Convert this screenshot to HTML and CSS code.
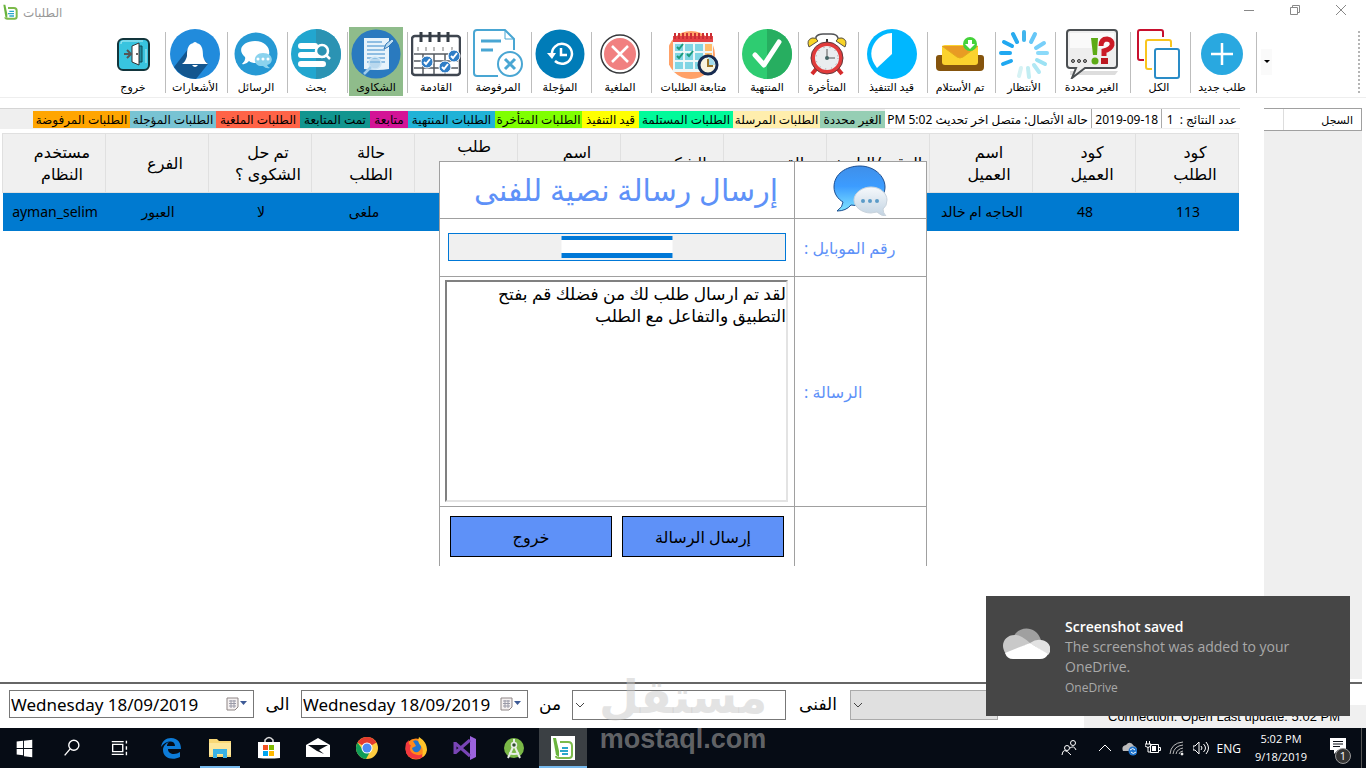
FILE: index.html
```html
<!DOCTYPE html>
<html lang="ar">
<head>
    <meta charset="UTF-8">
    <meta name="viewport" content="width=device-width, initial-scale=1.0">
    <title>الطلبات</title>
    <link rel="stylesheet" href="styles.css">
</head>
<body>

    <!-- Title bar -->
    <header class="titlebar">
        <svg class="app-icon" viewBox="0 0 24 24"><path d="M9 6h9q4 0 4 4v9q0 3-3 3H8q-3 0-3-2" fill="none" stroke="#7cba4b" stroke-width="3"/><path d="M2 1l3 18 3 2V15L5 1z" fill="#6ab43e"/><path d="M11 11h7M9 14.500h9M11 18h7" stroke="#2aa7c9" stroke-width="2"/></svg>
        <h1 class="window-title" dir="rtl">الطلبات</h1>
        <div class="window-controls">
            <button type="button" aria-label="Minimize"><svg viewBox="0 0 12 12"><path d="M1 6.500h10"/></svg></button>
            <button type="button" aria-label="Restore"><svg viewBox="0 0 12 12"><path d="M1.500 3.500h7v7h-7zM3.500 3.500v-2h7v7h-2"/></svg></button>
            <button type="button" aria-label="Close"><svg viewBox="0 0 12 12"><path d="M1 1l10 10M11 1L1 11"/></svg></button>
        </div>
    </header>

    <!-- Toolbar -->
    <nav class="toolbar" dir="rtl">
        <div class="tool-end">
            <button class="overflow" type="button" aria-label="المزيد"></button>
            <span class="grip"></span>
        </div>
        <div class="tool"><button type="button">
            <svg viewBox="0 0 50 50"><circle cx="25" cy="25" r="21" fill="#29a8e0"/><path d="M25 14v22M14 25h22" stroke="#fff" stroke-width="2.500"/></svg>
            <span>طلب جديد</span></button></div>
        <div class="tool"><button type="button">
            <svg viewBox="0 0 50 50" fill="none" stroke-width="2"><path d="M10 31H6q-2 0-2-2V3q0-2 2-2h21q2 0 2 2v5" stroke="#c8102e"/><path d="M18 40h-4q-2 0-2-2V13q0-2 2-2h21q2 0 2 2v5" stroke="#f9c51e"/><rect x="21" y="20" width="24" height="29" rx="2" fill="#fff" stroke="#2a8cc7"/></svg>
            <span>الكل</span></button></div>
        <div class="tool"><button type="button">
            <svg class="wide-icon" viewBox="0 0 54 50"><path d="M5 42h48l-3 4H5z" fill="#ddd"/><path d="M5 1h44q3 0 3 3v32q0 3-3 3H20L7 49l4-10H5q-3 0-3-3V4q0-3 3-3z" fill="#eee" stroke="#4b4f52" stroke-width="2"/><path d="M5 4h44v15H5z" fill="#fafafa"/><g fill="#aaa" stroke="#333"><circle cx="8" cy="32" r="1.500"/><circle cx="14" cy="32" r="1.500"/><circle cx="20" cy="32" r="1.500"/></g><path d="M26 9h7l-1 17h-4z" fill="#5dab16"/><circle cx="30" cy="32" r="3.500" fill="#5dab16"/><path d="M36 17q0-7 6-7 6 1 5 6-1 4-8 6v5" fill="none" stroke="#cb1b27" stroke-width="5"/><path d="M36 29h7v6h-7z" fill="#bb1820"/></svg>
            <span>الغير محددة</span></button></div>
        <div class="tool"><button type="button">
            <svg viewBox="0 0 50 50" stroke-width="4" stroke-linecap="round"><path d="M25 3v8" stroke="#42b5ed"/><path d="M36 5l-4 8" stroke="#67c7f7"/><path d="M45 14l-8 5" stroke="#78cff9"/><path d="M48 24h-9" stroke="#8bdafa"/><path d="M46 35l-8-4" stroke="#9ce2f4"/><path d="M40 43l-5-7" stroke="#b1e8f4"/><path d="M30 48l-1-9" stroke="#c1edf2"/><path d="M20 47l2-8" stroke="#d6f2f4"/><path d="M4 35l8-3" stroke="#20a8f1"/><path d="M2 24h9" stroke="#20a8f1"/><path d="M5 13l8 4" stroke="#20a8f1"/><path d="M14 5l4 8" stroke="#29abef"/></svg>
            <span>الأنتظار</span></button></div>
        <div class="tool"><button type="button">
            <svg viewBox="0 0 50 50"><path d="M4 26h9v9h24v-9h9q3 0 3 3v9q0 4-4 4H5q-4 0-4-4v-9q0-3 3-3z" fill="#85540d"/><rect x="7" y="16" width="36" height="20" rx="3" fill="#fbd22e"/><path d="M7 17l15 11q3 2 6 0l15-11" fill="#e89b24" stroke="#e4a91d"/><circle cx="35" cy="15" r="7" fill="#44d239"/><path d="M33 11h4v4h3l-5 5-5-5h3z" fill="#fff"/></svg>
            <span>تم الأستلام</span></button></div>
        <div class="tool"><button type="button">
            <svg viewBox="0 0 50 50"><circle cx="25" cy="25" r="25" fill="#00b7ff"/><path d="M25 4v21L10 39Q-1 25 9 12q7-8 16-8z" fill="#fff"/></svg>
            <span>قيد التنفيذ</span></button></div>
        <div class="tool"><button type="button">
            <svg viewBox="0 0 50 50"><path d="M14 12v-4q2-3 7-3h8q6 0 7 4v3" fill="none" stroke="#505255" stroke-width="1.500"/><g fill="#f8d427" stroke="#565044"><path d="M7 18q-3-7 3-9 4-1 6 3z"/><path d="M43 18q3-7-3-9-4-1-6 3z"/></g><path d="M15 39l-5 6M35 39l5 6" stroke="#d52b2c" stroke-width="4"/><path d="M25 10v5" stroke="#333" stroke-width="2"/><circle cx="25" cy="29" r="14" fill="#e9edef" stroke="#e13b3b" stroke-width="4"/><circle cx="25" cy="29" r="16" fill="none" stroke="#63383b"/><path d="M25 20v9h8" fill="none" stroke="#555"/><circle cx="25" cy="29" r="11" fill="none" stroke="#999" stroke-dasharray="1 5"/><circle cx="25" cy="29" r="2" fill="#466"/></svg>
            <span>المتأخرة</span></button></div>
        <div class="tool"><button type="button">
            <svg viewBox="0 0 50 50"><circle cx="25" cy="25" r="25" fill="#2ecc71"/><path d="M25 0a25 25 0 0 1 0 50z" fill="#27ae60"/><path d="M13 26l9 10 15-23" fill="none" stroke="#fff" stroke-width="5" stroke-linecap="round" stroke-linejoin="round"/></svg>
            <span>المنتهية</span></button></div>
        <div class="tool"><button type="button">
            <svg viewBox="0 0 50 50"><circle cx="22" cy="26" r="24" fill="#ffa168"/><path d="M4 10h40v33H4z" fill="#eef7f8"/><g fill="#80d5e4"><path d="M6 15h8v7H6zM16 15h8v7h-8zM26 15h8v7h-8zM6 24h8v7H6zM16 24h8v7h-8zM26 24h8v7h-8zM6 33h8v7H6zM16 33h8v7h-8zM26 33h8v7h-8z"/></g><path d="M36 15h7v7h-7zM36 24h7v7h-7z" fill="#ffbd69"/><path d="M4 7h40v6H4z" fill="#e44245"/><path d="M6 4v6M10 4v6M14 4v6M18 4v6M22 4v6M26 4v6M30 4v6M34 4v6M38 4v6M42 4v6" stroke="#cc2e35" stroke-width="2"/><path d="M8 18l2 2 4-5M18 25l2 2 4-5M8 27l2 2 4-5" fill="none" stroke="#1b9a7c" stroke-width="2"/><circle cx="39" cy="36" r="9" fill="#f8f4df" stroke="#172b50" stroke-width="3"/><path d="M39 28v8h7a8 8 0 0 0-7-8" fill="#a3dced"/><path d="M39 30v7h5" fill="none" stroke="#9b7528" stroke-width="2"/></svg>
            <span>متابعة الطلبات</span></button></div>
        <div class="tool"><button type="button">
            <svg viewBox="0 0 50 50"><circle cx="25" cy="25" r="19" fill="#fff" stroke="#36383b" stroke-width="1.500"/><circle cx="25" cy="25" r="16" fill="#f18080"/><path d="M17 17l16 16M33 17L17 33" stroke="#fff" stroke-width="2.500"/></svg>
            <span>الملغية</span></button></div>
        <div class="tool"><button type="button">
            <svg viewBox="0 0 50 50"><circle cx="25" cy="25" r="24.500" fill="#007cb8"/><path d="M17 26a10 10 0 1 1 3 6M26 19v7h6" fill="none" stroke="#fff" stroke-width="2.500"/><path d="M12 24h9l-4 6z" fill="#fff"/></svg>
            <span>المؤجلة</span></button></div>
        <div class="tool"><button type="button">
            <svg viewBox="0 0 50 50" fill="none" stroke="#49a6d3" stroke-width="2"><path d="M25 47H4q-3 0-3-3V4q0-3 3-3h28l9 9v11"/><path d="M32 1v9h9" stroke-width="1"/><path d="M8 12h20M8 21h12" stroke-width="3"/><circle cx="37" cy="35" r="12"/><path d="M32 30l10 10M42 30L32 40" stroke-width="3"/></svg>
            <span>المرفوضة</span></button></div>
        <div class="tool"><button type="button">
            <svg viewBox="0 0 50 50"><rect x="1" y="7" width="48" height="39" rx="3" fill="#fff" stroke="#3f4650" stroke-width="2.500"/><path d="M10 3v10M19 3v10M28 3v10M37 3v10" stroke="#353c45" stroke-width="3"/><path d="M7 18v4M15 18v4M23 18v4M32 18v4M41 18v4" stroke="#777"/><path d="M3 25h44M3 32h44M3 39h44M12 25v20M23 25v20M34 25v20" stroke="#555b61" stroke-width="1.500"/><g fill="#2f7dc6" stroke="#fff"><circle cx="16" cy="33" r="6"/><circle cx="34" cy="38" r="6"/><circle cx="43" cy="27" r="6"/></g><path d="M13 33l2 2 4-5M31 38l2 2 4-5M40 27l2 2 4-5" fill="none" stroke="#fff" stroke-width="2"/></svg>
            <span>القادمة</span></button></div>
        <div class="tool active"><button type="button">
            <svg viewBox="0 0 50 50"><circle cx="25" cy="25" r="24.500" fill="#2a7abf"/><path d="M13 9h25v31q-11 2-25 0z" fill="#e7f3fb"/><path d="M16 13h15M16 17h18M16 21h18M16 25h18M16 29h18M16 33h18" stroke="#73addc" stroke-width="1.500"/><path d="M33 20l2-5 6-5 2 2-6 6z" fill="#b9dbf2" stroke="#3176b5"/><circle cx="24" cy="34" r="6" fill="#8bbde1" fill-opacity=".5" stroke="#cde5f5" stroke-width="1.500"/><path d="M20 38l-7 7" stroke="#9fcceb" stroke-width="2.500"/></svg>
            <span>الشكاوى</span></button></div>
        <div class="tool"><button type="button">
            <svg viewBox="0 0 50 50"><circle cx="25" cy="25" r="25" fill="#22a6cf"/><path d="M25 0a25 25 0 0 1 0 50z" fill="#2b93b3"/><path d="M10 17h14M10 26h22M10 35h22" stroke="#fff" stroke-width="6" stroke-linecap="round"/><circle cx="31" cy="22" r="6" fill="#2b93b3" stroke="#fff" stroke-width="2.500"/><path d="M35 26l4 4" stroke="#fff" stroke-width="2.500"/></svg>
            <span>بحث</span></button></div>
        <div class="tool"><button type="button">
            <svg viewBox="0 0 50 50"><circle cx="25" cy="25" r="21.500" fill="#2699d4"/><path d="M24 12c18 0 19 21 3 22-4 0-7 0-9-2q-3 4-7 3 4-3 3-7C5 20 13 12 24 12z" fill="#fff"/><path d="M32 24c11 0 11 11 4 12q1 2 3 3-4 1-7-2c-11 1-11-13 0-13z" fill="#8bd3ee"/><g fill="#fff"><circle cx="27" cy="30" r="1.500"/><circle cx="32" cy="30" r="1.500"/><circle cx="37" cy="30" r="1.500"/></g></svg>
            <span>الرسائل</span></button></div>
        <div class="tool"><button type="button">
            <svg viewBox="0 0 50 50"><circle cx="25" cy="25" r="25" fill="#218bdc"/><path d="M22 15L4 38q8 12 22 12L38 35z" fill="#13568f"/><path d="M25 14c7 0 8 6 8 13q1 5 5 8H12q4-3 5-8c0-7 1-13 8-13z" fill="#fff"/><path d="M22 36h6q-3 4-6 0z" fill="#fff"/><circle cx="25" cy="15" r="2" fill="#fff"/></svg>
            <span>الأشعارات</span></button></div>
        <div class="tool last"><button type="button">
            <svg viewBox="0 0 50 50"><rect x="10" y="10" width="31" height="31" rx="5" fill="#38c4df" stroke="#12353c" stroke-width="2"/><path d="M13 15v-1q0-2 2-2h20M38 20v14" fill="none" stroke="#b5edf5"/><path d="M29 17h5v16h-5z" fill="#208ca0" stroke="#124852"/><path d="M24 17l7-3v22l-7-3z" fill="#fff" stroke="#333"/><circle cx="29" cy="25" r="1" fill="#333"/><path d="M16 25h7M19 21l4 4-4 4" fill="none" stroke="#555" stroke-width="2"/></svg>
            <span>خروج</span></button></div>
    </nav>

    <main class="content">
        <section class="requests">
            <!-- Status strip and colour legend -->
            <div class="status" dir="rtl">
                <span class="info">عدد النتائج :&nbsp; 1</span>
                <span class="info divided">2019-09-18</span>
                <span class="info divided">حالة الأتصال: متصل اخر تحديث 5:02 PM</span>
                <span class="legend unspecified">الغير محددة</span>
                <span class="legend sent">الطلبات المرسلة</span>
                <span class="legend received">الطلبات المستلمة</span>
                <span class="legend running">قيد التنفيذ</span>
                <span class="legend late">الطلبات المتأخرة</span>
                <span class="legend finished">الطلبات المنتهية</span>
                <span class="legend follow">متابعة</span>
                <span class="legend followed">تمت المتابعة</span>
                <span class="legend cancelled">الطلبات الملغية</span>
                <span class="legend postponed">الطلبات المؤجلة</span>
                <span class="legend rejected">الطلبات المرفوضة</span>
            </div>

            <table class="requests-table" dir="rtl">
                <thead>
                    <tr>
                        <th>كود<br>الطلب</th>
                        <th>كود<br>العميل</th>
                        <th>اسم<br>العميل</th>
                        <th class="one-line">الوقت/التاريخ</th>
                        <th>القسم</th>
                        <th>الشكوى</th>
                        <th>اسم<br>الفنى</th>
                        <th class="tall">طلب<br>متابعة</th>
                        <th>حالة<br>الطلب</th>
                        <th>تم حل<br>الشكوى ؟</th>
                        <th>الفرع</th>
                        <th>مستخدم<br>النظام</th>
                    </tr>
                </thead>
                <tbody>
                    <tr>
                        <td>113</td>
                        <td>48</td>
                        <td>الحاجه ام خالد</td>
                        <td></td>
                        <td></td>
                        <td></td>
                        <td></td>
                        <td></td>
                        <td>ملغى</td>
                        <td>لا</td>
                        <td>العبور</td>
                        <td>ayman_selim</td>
                    </tr>
                </tbody>
            </table>
        </section>

        <aside class="log">
            <div class="log-header" dir="rtl">السجل</div>
        </aside>
    </main>

    <!-- Filters -->
    <footer class="filters">
        <div class="date-box">
            <input type="text" value="Wednesday 18/09/2019" aria-label="الى">
            <button type="button" aria-label="تقويم"><svg viewBox="0 0 22 14"><path d="M1 1h11v9l-3 3H1z" fill="#f5f1f1" stroke="#8e8585"/><path d="M3 4h7M3 6.500h7M3 9h7M5 3v8M8 3v8" stroke="#9a9aa8"/><path d="M14 4h7l-3.500 4z" fill="#3d5a96"/></svg></button>
        </div>
        <span class="filter-label">الى</span>
        <div class="date-box narrow">
            <input type="text" value="Wednesday 18/09/2019" aria-label="من">
            <button type="button" aria-label="تقويم"><svg viewBox="0 0 22 14"><path d="M1 1h11v9l-3 3H1z" fill="#f5f1f1" stroke="#8e8585"/><path d="M3 4h7M3 6.500h7M3 9h7M5 3v8M8 3v8" stroke="#9a9aa8"/><path d="M14 4h7l-3.500 4z" fill="#3d5a96"/></svg></button>
        </div>
        <span class="filter-label">من</span>
        <select class="combo" id="technician"><option></option></select>
        <label class="filter-label" for="technician">الفنى</label>
        <select class="combo disabled" aria-label="الفرع" disabled><option></option></select>
        <p class="connection">Connection: Open Last update: 5:02 PM</p>
    </footer>

    <!-- Message dialog -->
    <form class="dialog">
        <div class="cell"><h2 class="dialog-title" dir="rtl">إرسال رسالة نصية للفنى</h2></div>
        <div class="cell side icon-cell">
            <svg class="chat-icon" viewBox="0 0 56 52">
                <defs>
                    <linearGradient id="blue" x1="0" y1="0" x2="0" y2="1"><stop offset="0" stop-color="#3f8fe9"/><stop offset=".45" stop-color="#3c9cff"/><stop offset="1" stop-color="#7fe4ff"/></linearGradient>
                    <linearGradient id="pale" x1="0" y1="0" x2="0" y2="1"><stop offset="0" stop-color="#f6f9fc"/><stop offset="1" stop-color="#c2d3e2"/></linearGradient>
                </defs>
                <path d="M27 2C13 2 1 10 1 23c0 7 4 12 9 15q0 5-6 9 9 0 14-6l9 1c14 0 25-8 25-19S41 2 27 2z" fill="url(#blue)" stroke="#1d4f91"/>
                <path d="M38 23c-9 0-17 6-17 13s8 13 17 13l6-1q4 4 9 4-3-3-3-7 4-3 4-9c0-7-7-13-16-13z" fill="url(#pale)" stroke="#c9d3dc"/>
                <g fill="#5b9bc8"><circle cx="30" cy="37" r="2"/><circle cx="37" cy="37" r="2"/><circle cx="44" cy="37" r="2"/></g>
            </svg>
        </div>
        <div class="cell phone-cell">
            <input class="phone" type="text" id="phone">
            <span class="phone-selection"></span>
        </div>
        <div class="cell side"><label for="phone" dir="rtl">رقم الموبايل :</label></div>
        <div class="cell message-cell"><textarea id="message" dir="rtl">لقد تم ارسال طلب لك من فضلك قم بفتح
التطبيق والتفاعل مع الطلب</textarea></div>
        <div class="cell side"><label for="message" dir="rtl">الرسالة :</label></div>
        <div class="cell actions">
            <button type="button">خروج</button>
            <button type="button">إرسال الرسالة</button>
        </div>
        <div class="cell side"></div>
    </form>

    <!-- Taskbar -->
    <div class="taskbar">
        <button class="task" type="button" aria-label="Start"><svg viewBox="0 0 24 24" fill="#fff"><path d="M4 5l7-1v8H4zM12 4l9-1v9h-9zM4 13h7v7l-7-1zM12 13h9v9l-9-1z"/></svg></button>
        <button class="task" type="button" aria-label="Search"><svg viewBox="0 0 24 24" fill="none" stroke="#fff" stroke-width="1.500"><circle cx="14" cy="9" r="5.500"/><path d="M10 13l-6 7"/></svg></button>
        <button class="task" type="button" aria-label="Task view"><svg viewBox="0 0 24 24" fill="none" stroke="#fff" stroke-width="1.500"><path d="M4 8h11v8H4zM3 5h13M3 19h13M19 4v3M19 10v4M19 16v4"/></svg></button>
        <div class="pinned">
            <button class="task" type="button" aria-label="Edge"><svg viewBox="0 0 24 24"><path d="M2 11C3 5 7 2 12 2c7 0 10 5 10 11H9c0 6 8 6 12 3v5c-8 4-17 1-17-7 0-4 3-7 6-8-2 2-2 3-2 4h8c0-6-9-6-14 1z" fill="#0d7cd8"/></svg></button>
            <button class="task open" type="button" aria-label="File Explorer"><svg viewBox="0 0 24 24"><path d="M1 3h8l2 2h12v16H1z" fill="#f8d775"/><path d="M1 7h22v12H1z" fill="#fde79b"/><path d="M5 13h14v9h-4v-4H9v4H5z" fill="#39b2e5"/></svg></button>
            <button class="task" type="button" aria-label="Store"><svg viewBox="0 0 24 24"><path d="M8 7V4q4-5 8 0v3" fill="none" stroke="#ddd" stroke-width="1.500"/><path d="M1 6h22v16q-11 1-22 0z" fill="#fff"/><path d="M6 9h5v5H6z" fill="#f25022"/><path d="M12 9h5v5h-5z" fill="#7fba00"/><path d="M6 15h5v5H6z" fill="#00a4ef"/><path d="M12 15h5v5h-5z" fill="#ffb900"/></svg></button>
            <button class="task" type="button" aria-label="Mail"><svg viewBox="0 0 24 24"><path d="M0 9l12-7 12 7v12H0z" fill="#fff"/><path d="M2 9h20l-9 5 5 4-7-3z" fill="#0a0f16"/></svg></button>
            <button class="task" type="button" aria-label="Chrome"><svg viewBox="0 0 24 24"><circle cx="12" cy="12" r="11" fill="#ffcd40"/><path d="M12 12L2.500 6.500A11 11 0 0 1 21.500 6.500z" fill="#e33b2e"/><path d="M2.500 6.500a11 11 0 0 0 8.500 16.500l5-9h-8z" fill="#109d58"/><circle cx="12" cy="12" r="5.500" fill="#fff"/><circle cx="12" cy="12" r="4.500" fill="#4a8af4"/></svg></button>
            <button class="task" type="button" aria-label="Firefox"><svg viewBox="0 0 24 24"><circle cx="12" cy="13" r="10.500" fill="#ff8a1c"/><path d="M2 7Q-1 22 12 23q8 0 10-7-5 5-12 2-6-3-3-9-3 0-2-5z" fill="#f2383e"/><path d="M9 5q4-2 7 2 3 6-2 9-5 1-6-4l4-2q-1-2-3-5z" fill="#2175cf"/><path d="M15 1q8 5 8 13-1 6-5 7 2-8-1-11-4-4-2-9z" fill="#ffc52a"/></svg></button>
            <button class="task" type="button" aria-label="Visual Studio"><svg viewBox="0 0 24 24"><path d="M17 0l6 3v18l-6 3z" fill="#9b63dd"/><path d="M2 7l15 13M2 17L17 4M2 6v12" fill="none" stroke="#7945b5" stroke-width="3"/></svg></button>
            <button class="task" type="button" aria-label="Android Studio"><svg viewBox="0 0 24 24"><circle cx="12" cy="12" r="10" fill="#7ab847"/><circle cx="12" cy="9" r="2.500" fill="#31502f" stroke="#e7eee5" stroke-width="1.500"/><path d="M12 3v3M11 11L6 22M13 11l5 11M7 17q5 2 10 0" fill="none" stroke="#e7eee5" stroke-width="2"/></svg></button>
            <button class="task open current" type="button" aria-label="الطلبات"><svg viewBox="0 0 24 24"><path d="M0 0h24v24H0z" fill="#fff"/><path d="M9 6h8q4 0 4 4v9q0 3-3 3H8q-3 0-3-2" fill="none" stroke="#7cba4b" stroke-width="2"/><path d="M2 2l3 17 3 2V15L5 2z" fill="#6ab43e"/><path d="M11 12h6M9 15h8M11 18h6" stroke="#2aa7c9" stroke-width="2"/></svg></button>
        </div>
        <div class="tray">
            <svg viewBox="0 0 16 16"><circle cx="6" cy="8" r="2.500"/><circle cx="12" cy="3" r="2.500"/><path d="M1 15q1-9 9 0M9 8q4-3 6 2"/></svg>
            <svg viewBox="0 0 16 16"><path d="M2 11l6-6 6 6"/></svg>
            <svg viewBox="0 0 16 16"><path d="M2 11q-2-5 3-6 4-5 8 1 4 1 2 5z" fill="#bbb" stroke="none"/><circle cx="12" cy="11" r="4.500" fill="#1f75cf" stroke="none"/><path d="M9 10q3-3 5 0M15 12q-3 3-5 0"/></svg>
            <svg viewBox="0 0 16 16"><path d="M5.500 4.500h8v8h-8zM13.500 7.500h2v3h-2M1.500 1v3M4.500 1v3M0 4h6v2q-3 3-6 0zM3 7v5h3"/><path d="M7 6h4v5H7z" fill="#fff" stroke="none"/></svg>
            <svg viewBox="0 0 16 16"><path d="M1 14Q2 3 14 2M4 14q1-8 10-9M7 14q1-5 7-6M10 14q1-3 4-3" stroke="#bbb"/><circle cx="13" cy="14" r="1" fill="#fff"/></svg>
            <svg viewBox="0 0 16 16"><path d="M0 6h2l4-4v12l-4-4H0zM8 6q2 2 0 4M10.500 4q4 4 0 8M13 2q5 6 0 12"/></svg>
            <span class="language">ENG</span>
            <div class="clock"><time>5:02 PM</time><span>9/18/2019</span></div>
            <button class="notifications" type="button" aria-label="Notifications">
                <svg viewBox="0 0 16 16"><path d="M0 0h16v12H8l-4 4v-4H0z" fill="#fff" stroke="none"/><path d="M3 3.500h10M3 6h10M3 8.500h7" stroke="#0a0f16"/></svg>
                <span class="badge">1</span>
            </button>
            <span class="show-desktop"></span>
        </div>
    </div>

    <!-- Notification toast -->
    <div class="toast">
        <svg class="cloud" viewBox="0 0 48 32"><path d="M12 8c5-10 22-11 27 4l-11 8L10 9z" fill="#a0a0a0"/><path d="M4 26C-3 17 3 6 14 7q5 0 14 8z" fill="#c9c9c9"/><path d="M28 15q6-4 11-3c9 1 12 10 7 15z" fill="#e2e2e2"/><path d="M3 25l25-10 18 11q-2 5-8 5H11q-6 0-8-6z" fill="#fff"/></svg>
        <div class="toast-text">
            <strong>Screenshot saved</strong>
            <p>The screenshot was added to your OneDrive.</p>
            <small>OneDrive</small>
        </div>
    </div>

    <!-- Watermark -->
    <div class="watermark">
        <span class="watermark-logo">مستقل</span>
        <span class="watermark-site">mostaql.com</span>
    </div>

</body>
</html>
```
FILE: styles.css
```css
* {
    box-sizing: border-box;
}

/* General Page Style */
body {
    font-family: "Noto Sans", "DejaVu Sans", sans-serif;
    margin: 0;
    height: 100vh;
    display: flex;
    flex-direction: column;
    position: relative;
    overflow: hidden;
    background-color: #fff;
    color: #000;
}

button, input, select, textarea {
    font-family: inherit;
    color: inherit;
}

h1, h2, p {
    margin: 0;
    font-weight: normal;
}

/* Title bar */
.titlebar {
    display: flex;
    align-items: center;
    height: 24px;
    padding: 0 2px;
}

.app-icon {
    width: 16px;
    height: 16px;
}

.window-title {
    margin-left: 5px;
    font-size: 12px;
    color: #999;
}

.window-controls {
    display: flex;
    margin-left: auto;
}

.window-controls button {
    width: 46px;
    height: 22px;
    padding: 0 0 2px;
    border: none;
    background: none;
}

.window-controls svg {
    width: 12px;
    height: 12px;
    fill: none;
    stroke: #888;
}

/* Toolbar */
.toolbar {
    display: grid;
    grid-template-columns: 110px 66px 60px 75px 60px 68px 69px 60px 60px 87px 60px 60px 64px 60px 60px 60px 60px 62px 62px;
    height: 74px;
    border-bottom: 1px solid #eee;
}

.tool, .tool-end {
    padding: 3px 4px 1px 2px;
    background: linear-gradient(#bdbdbd, #bdbdbd) left 8px / 1px 61px no-repeat;
}

.tool.last {
    background: none;
}

.tool button {
    display: flex;
    flex-direction: column;
    align-items: center;
    width: 100%;
    height: 69px;
    padding: 2px 0 0;
    border: none;
    background: none;
    font-size: 11px;
    line-height: 16px;
    white-space: nowrap;
}

.tool.active button {
    background-color: #8fbc8b;
}

.tool svg {
    flex: none;
    width: 50px;
    height: 50px;
}

.tool .wide-icon {
    width: 54px;
}

.tool-end {
    display: flex;
    align-items: center;
    justify-content: space-between;
    direction: ltr;
    padding: 3px 6px 1px 5px;
}

.overflow {
    width: 11px;
    height: 26px;
    padding: 0;
    border: none;
    background-color: #fafafa;
}

.overflow::before {
    content: "";
    display: block;
    margin: 0 auto;
    width: 0;
    border: 3px solid transparent;
    border-top-color: #000;
    border-bottom: none;
}

.grip {
    height: 62px;
    border-left: 2px dotted #b5b5b5;
}

/* Content */
.content {
    flex: 1;
    display: flex;
    gap: 24px;
    padding: 10px 4px 3px 0;
}

.requests {
    flex: 1;
}

/* Status strip */
.status {
    display: grid;
    grid-template-columns: 78px 70px 207px 65px 87px 94px 57px 87px 87px 38px 70px 84px 86px 97px;
    height: 21px;
    padding-bottom: 1px;
    border-top: 1px solid #d5d5d5;
    background-color: #efefef;
    font-size: 12px;
    line-height: 17px;
    white-space: nowrap;
}

.info {
    padding: 2px 3px 0;
    background-color: #fff;
}

.divided {
    border-right: 1px solid #aaa;
}

.legend {
    margin-top: 2px;
    text-align: center;
}

.unspecified { background-color: #96ceb4; }
.sent { background-color: #ffeead; }
.received { background-color: #00fa9a; }
.running { background-color: #ff0; }
.late { background-color: #7fff00; }
.finished { background-color: #20b2d7; }
.follow { background-color: #d31496; }
.followed { background-color: #12958f; }
.cancelled { background-color: #ff6347; }
.postponed { background-color: #78c3d3; }
.rejected { background-color: #ffa500; }

/* Requests table */
.requests-table {
    width: calc(100% - 3px);
    margin: 4px 1px 0 2px;
    border-collapse: collapse;
    table-layout: fixed;
}

.requests-table th {
    height: 59px;
    padding: 0 6px 0 22px;
    border: 1px solid #e0e0e0;
    background-color: #f0f0f0;
    font-size: 16px;
    font-weight: normal;
    line-height: 22px;
    white-space: nowrap;
}

.requests-table .one-line {
    padding: 0;
}

.requests-table .tall {
    padding-bottom: 12px;
}

.requests-table td {
    height: 38px;
    padding: 0 0 0 2px;
    background-color: #007ad0;
    font-size: 14px;
    text-align: center;
}

/* Log panel */
.log {
    width: 98px;
    background-color: #efefef;
}

.log-header {
    height: 23px;
    padding: 0 8px;
    border: 1px solid #a0a0a0;
    border-left: none;
    background: linear-gradient(#ddd, #ddd) 19px 0 / 1px 100% no-repeat #fff;
    font-size: 11px;
    line-height: 21px;
}

/* Filters */
.filters {
    display: flex;
    align-items: flex-start;
    height: 46px;
    margin-right: 4px;
    padding: 6px 0 0 9px;
    border-top: 2px solid #666;
}

.date-box {
    display: flex;
    align-items: center;
    width: 245px;
    height: 28px;
    border: 1px solid #777;
}

.date-box.narrow {
    width: 227px;
}

.date-box input {
    flex: 1;
    min-width: 0;
    padding: 0 1px;
    border: none;
    background: none;
    font-size: 17px;
}

.date-box button {
    padding: 0 5px 0 0;
    border: none;
    background: none;
}

.date-box svg {
    display: block;
    width: 22px;
    height: 14px;
}

.filter-label {
    flex: none;
    width: 47px;
    font-size: 17px;
    line-height: 28px;
    text-align: center;
}

.combo + .filter-label {
    width: 64px;
}

.date-box.narrow + .filter-label {
    width: 44px;
}

.combo {
    appearance: none;
    width: 214px;
    height: 30px;
    border: 1px solid #777;
    border-radius: 0;
    background: url("data:image/svg+xml,%3Csvg xmlns='http://www.w3.org/2000/svg' width='10' height='6'%3E%3Cpath d='M1 1l4 4 4-4' fill='none' stroke='%23444'/%3E%3C/svg%3E") 2px center no-repeat #fff;
}

.combo.disabled {
    width: 148px;
    border-color: #aaa;
    background-color: #e0e0e0;
    opacity: 1;
}

.connection {
    flex: 1;
    align-self: flex-end;
    height: 23px;
    margin: 0 -4px 0 86px;
    padding-left: 24px;
    background-color: #f0f0f0;
    font-family: "Liberation Sans", Arial, sans-serif;
    font-size: 13px;
    line-height: 24px;
    white-space: nowrap;
}

/* Message dialog */
.dialog {
    position: absolute;
    top: 161px;
    left: 50%;
    transform: translateX(-50%);
    display: grid;
    grid-template-columns: 354px 132px;
    border: 1px solid #a0a0a0;
    border-bottom: none;
    background-color: #fff;
    color: #5e91f8;
}

.cell {
    display: flex;
    align-items: center;
    min-height: 57px;
    border-bottom: 1px solid #a0a0a0;
}

.cell.side {
    padding-left: 9px;
    border-left: 1px solid #a0a0a0;
    font-size: 16px;
}

.cell.icon-cell {
    justify-content: center;
    padding: 0;
}

.dialog .cell:nth-last-child(-n+2) {
    border-bottom: none;
}

.dialog-title {
    width: 100%;
    padding: 0 16px;
    font-size: 30px;
    line-height: 40px;
    white-space: nowrap;
}

.chat-icon {
    width: 56px;
    height: 52px;
}

.phone-cell {
    position: relative;
    padding: 14px 8px 15px;
}

.phone {
    width: 100%;
    height: 28px;
    border: 1px solid #0078d7;
    background-color: #f0f0f0;
    outline: none;
}

/* Masked number over the selected text */
.phone-selection {
    position: absolute;
    left: 50%;
    transform: translateX(-50%);
    width: 111px;
    height: 22px;
    border: solid #0078d7;
    border-width: 4px 0 5px;
    background-color: #fff;
}

.message-cell {
    padding: 3px 6px 4px 5px;
}

.message-cell textarea {
    display: block;
    width: 100%;
    height: 222px;
    padding: 1px 0;
    border: 2px solid;
    border-color: #808080 #e3e3e3 #e3e3e3 #808080;
    background-color: #fff;
    color: #000;
    font-size: 17px;
    line-height: 22px;
    resize: none;
    outline: none;
}

.actions {
    gap: 10px;
    padding: 9px 10px;
}

.actions button {
    flex: 1;
    height: 41px;
    border: 1px solid #000;
    background-color: #5e91f8;
    color: #000;
    font-size: 16px;
}

/* Taskbar */
.taskbar {
    display: flex;
    height: 40px;
    background-color: #060c15;
    color: #fff;
}

.task {
    display: flex;
    align-items: center;
    justify-content: center;
    width: 48px;
    padding: 0;
    border: none;
    background: none;
}

.task svg {
    width: 22px;
    height: 22px;
}

.pinned {
    display: flex;
    gap: 1px;
    margin-left: 3px;
}

.pinned svg {
    width: 24px;
    height: 24px;
}

.open {
    background: linear-gradient(#76b9ed, #76b9ed) center bottom / 40px 2px no-repeat;
}

.current {
    background-color: #3b4044;
    background-size: 48px 2px;
}

.tray {
    display: flex;
    align-items: center;
    gap: 8px;
    margin-left: auto;
    padding-right: 4px;
    font-family: "Open Sans", "Noto Sans", sans-serif;
    font-size: 12px;
}

.tray svg {
    width: 16px;
    height: 16px;
    fill: none;
    stroke: #fff;
}

.tray > svg:first-child {
    margin-right: 12px;
}

.clock {
    display: flex;
    flex-direction: column;
    align-items: center;
    width: 60px;
    font-size: 11px;
    line-height: 18px;
}

.notifications {
    position: relative;
    width: 42px;
    height: 40px;
    padding: 0 4px 0 0;
    border: none;
    background: none;
}

.badge {
    position: absolute;
    right: 10px;
    bottom: 4px;
    width: 16px;
    height: 16px;
    border: 1px solid #999;
    border-radius: 50%;
    background-color: #333;
    color: #fff;
    font-size: 11px;
    line-height: 14px;
}

.show-desktop {
    height: 40px;
    margin-left: -8px;
    border-left: 1px solid #555;
}

.language {
    margin-right: 2px;
}

/* Notification toast */
.toast {
    position: absolute;
    right: 16px;
    bottom: 52px;
    display: flex;
    gap: 15px;
    width: 364px;
    height: 120px;
    padding: 21px 16px;
    background-color: #464646;
    color: #a9a9a9;
    font-family: "Open Sans", "Noto Sans", sans-serif;
    font-size: 14px;
    line-height: 20px;
}

.cloud {
    flex: none;
    width: 48px;
    height: 32px;
    margin-top: 11px;
}

.toast-text {
    flex: 1;
}

.toast strong {
    color: #fff;
    font-weight: 600;
}

.toast small {
    display: block;
    font-size: 12px;
    line-height: 22px;
}

/* Watermark */
.watermark {
    position: absolute;
    left: 50%;
    bottom: 12px;
    transform: translateX(-50%);
    display: flex;
    flex-direction: column;
    align-items: center;
    font-weight: bold;
    pointer-events: none;
}

.watermark-logo {
    color: rgba(200, 200, 200, 0.5);
    font-family: "DejaVu Sans", sans-serif;
    font-size: 46px;
    line-height: 50px;
}

.watermark-site {
    color: rgba(150, 150, 150, 0.65);
    font-family: "Liberation Sans", Arial, sans-serif;
    font-size: 27px;
    line-height: 34px;
}
```
